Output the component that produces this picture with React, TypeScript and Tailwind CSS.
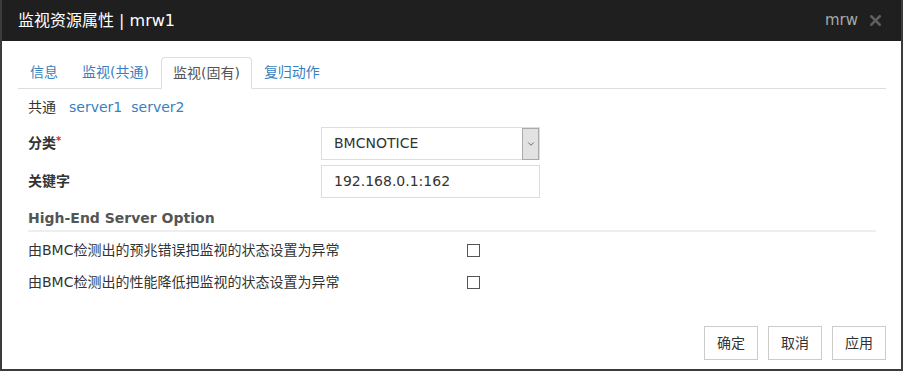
import { ChevronDown, X } from "lucide-react";

const font = { fontFamily: '"DejaVu Sans", "Noto Sans CJK SC", sans-serif' };

const tabs = ["信息", "监视(共通)", "监视(固有)", "复归动作"];

export default function App() {
  return (
    <div className="w-[904px] h-[372px] bg-white" style={font}>
      <div className="w-[903px] h-[371px] border-x-2 border-b-2 border-[#3c3c3c] flex flex-col">
        <div className="h-[41px] bg-[#1f1f1f] flex items-center justify-between pl-4 pr-[17px]">
          <span className="text-white text-[16px]">监视资源属性 | mrw1</span>
          <div className="flex items-center gap-[9px]">
            <span className="text-[#a8a8a8] text-[15px]">mrw</span>
            <X className="w-[17px] h-[17px] text-[#5e5e5e]" strokeWidth={3.5} />
          </div>
        </div>

        <div className="flex-1 flex flex-col pl-4 pr-[15px]">
          <div className="mt-4 flex border-b border-[#dddddd] h-[32px] items-end">
            {tabs.map((t, i) =>
              i === 2 ? (
                <div key={t} className="h-[32px] -mb-px px-[11px] flex items-center border border-[#dddddd] border-b-white bg-white text-[14px] text-[#555] rounded-t-sm">
                  {t}
                </div>
              ) : (
                <div key={t} className="h-[32px] px-[12px] flex items-center text-[14px] text-[#3a7fc0]">
                  {t}
                </div>
              )
            )}
          </div>

          <div className="flex items-center gap-[9px] mt-[8px] pl-[10px] text-[14px] h-[20px]">
            <span className="text-[#333]">共通</span>
            <span className="text-[#3a7fc0] ml-[4px]">server1</span>
            <span className="text-[#3a7fc0]">server2</span>
          </div>

          <div className="flex items-center mt-[10px] pl-[10px]">
            <div className="w-[293px] text-[14px] font-bold text-[#333]">
              分类<span className="text-[#c9302c] text-[10px] align-top">*</span>
            </div>
            <div className="w-[219px] h-[33px] border border-[#dddddd] flex items-center justify-between">
              <span className="pl-3 text-[14px] text-[#333]">BMCNOTICE</span>
              <div className="w-[17px] h-[32px] bg-[#e2e2e2] border border-[#aaaaaa] flex items-center justify-center">
                <ChevronDown className="w-[10px] h-[10px] text-[#555]" strokeWidth={2} />
              </div>
            </div>
          </div>

          <div className="flex items-center mt-[5px] pl-[10px]">
            <div className="w-[293px] text-[14px] font-bold text-[#333]">关键字</div>
            <div className="w-[219px] h-[33px] border border-[#dddddd] flex items-center">
              <span className="pl-3 text-[14px] text-[#333]">192.168.0.1:162</span>
            </div>
          </div>

          <div className="mt-[8px] ml-[10px] mr-[10px] border-b-2 border-[#eeeeee]">
            <span className="text-[14px] font-bold text-[#555]">High-End Server Option</span>
          </div>

          <div className="flex items-center mt-[7px] pl-[10px] h-[22px]">
            <span className="w-[439px] text-[14px] text-[#333]">由BMC检测出的预兆错误把监视的状态设置为异常</span>
            <div className="w-[13px] h-[13px] border border-[#555] bg-white" />
          </div>
          <div className="flex items-center mt-[10px] pl-[10px] h-[22px]">
            <span className="w-[439px] text-[14px] text-[#333]">由BMC检测出的性能降低把监视的状态设置为异常</span>
            <div className="w-[13px] h-[13px] border border-[#555] bg-white" />
          </div>

          <div className="flex justify-end gap-[10px] mt-auto mb-[9px]">
            {["确定", "取消", "应用"].map((b) => (
              <div key={b} className="w-[54px] h-[34px] border border-[#cccccc] flex items-center justify-center text-[14px] text-[#333]">
                {b}
              </div>
            ))}
          </div>
        </div>
      </div>
    </div>
  );
}
